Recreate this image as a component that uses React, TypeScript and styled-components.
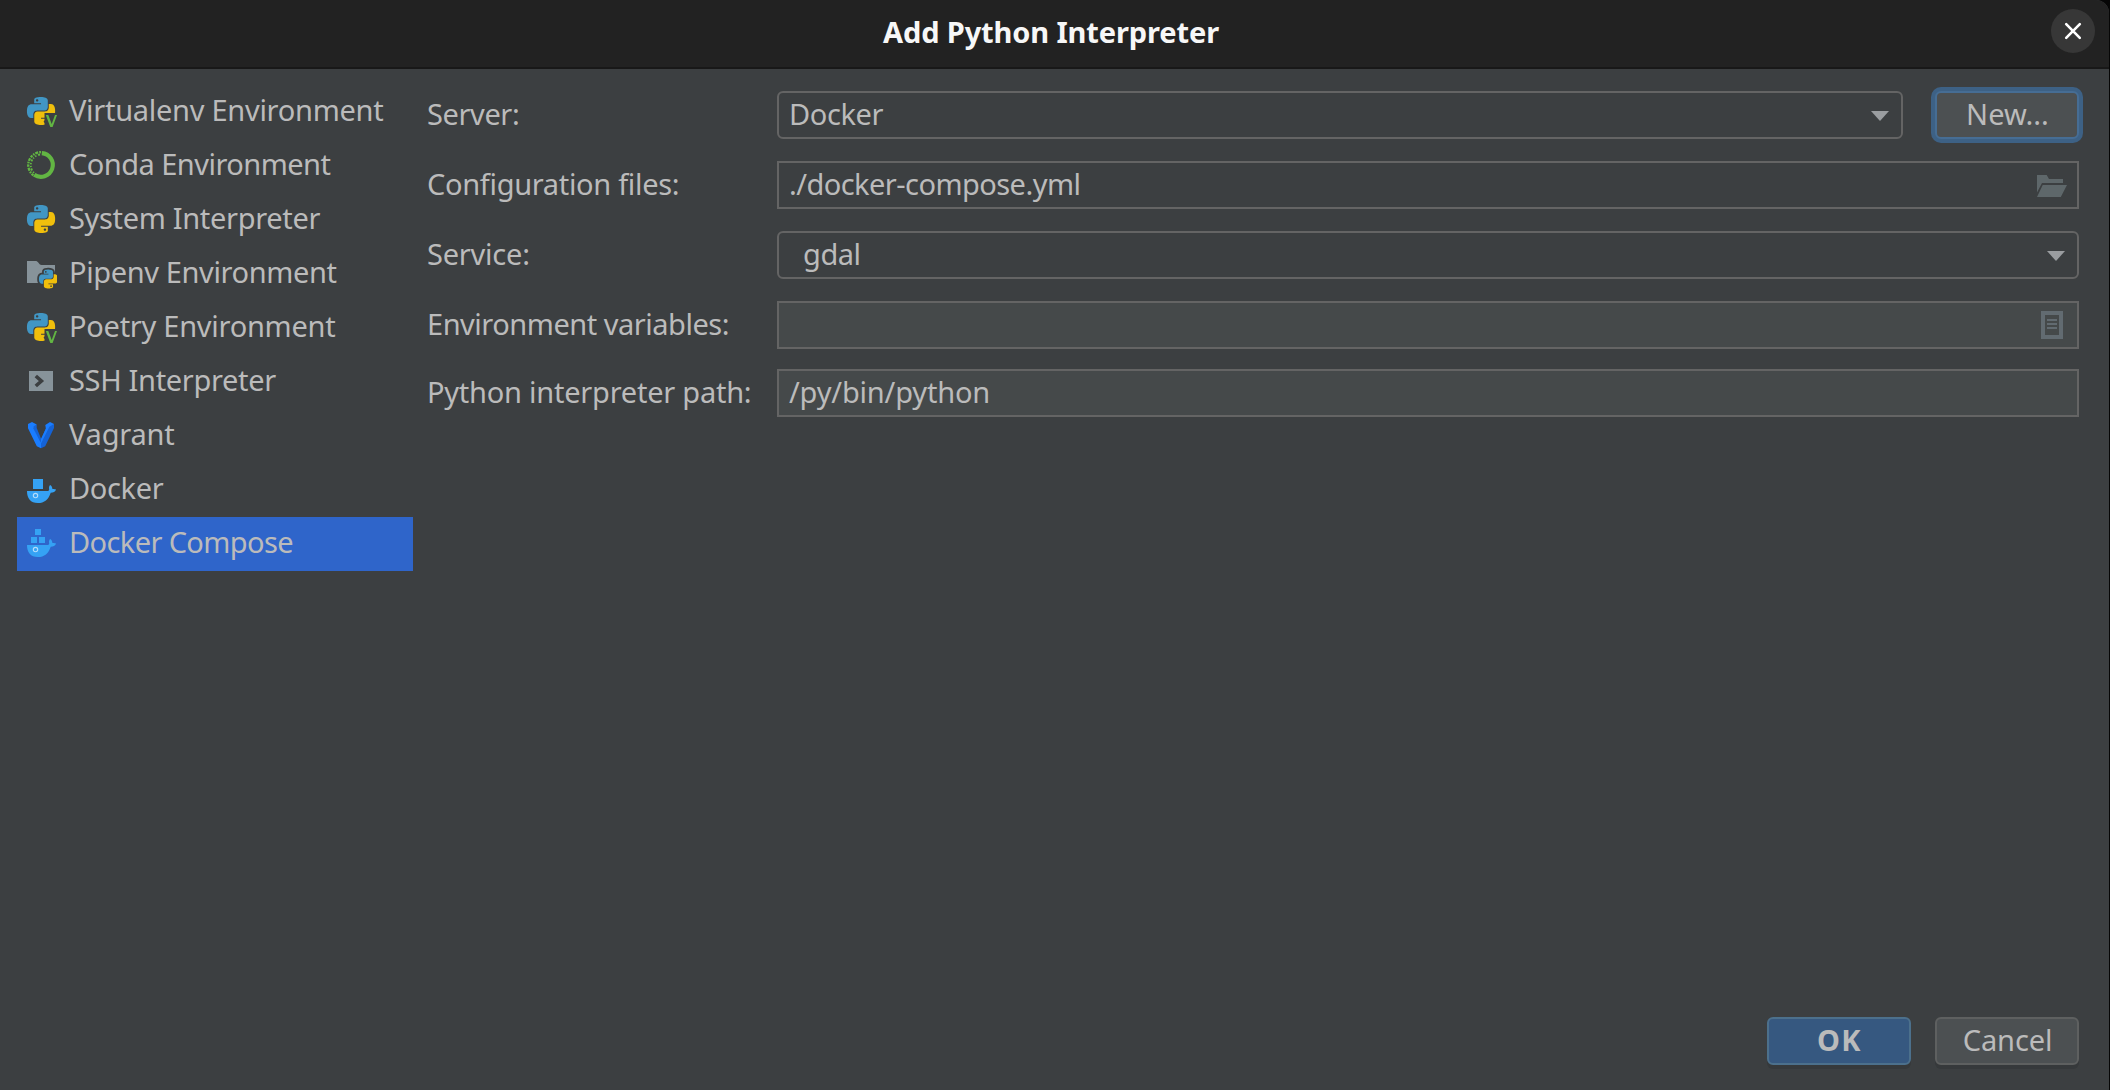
import React from "react";
import styled, { createGlobalStyle, css } from "styled-components";

const color = {
  panel: "#3c3f41",
  field: "#45494a",
  border: "#646464",
  text: "#bbbbbb",
  selection: "#2f65ca",
};

const GlobalStyle = createGlobalStyle`
  * { box-sizing: border-box; }
  body {
    margin: 0;
    background: #060606;
    font-family: "Noto Sans", "Open Sans", sans-serif;
    font-size: 29px;
    line-height: 40px;
    color: ${color.text};
    overflow: hidden;
  }
  svg { display: block; flex: none; }
`;

const Dialog = styled.div`
  display: flex;
  flex-direction: column;
  width: 2109px;
  height: 1090px;
  background: ${color.panel};
  border-top-right-radius: 13px;
  overflow: hidden;
`;

const TitleBar = styled.header`
  display: grid;
  grid-template-columns: 1fr auto 1fr;
  align-items: center;
  height: 69px;
  padding: 0 14px 5px 7px;
  background: #222222;
  border-bottom: 2px solid #181818;
`;

const Text = styled.span<{ $track?: number }>`
  white-space: nowrap;
  letter-spacing: ${(p) => p.$track ?? 0}px;
`;

const Title = styled(Text)`
  grid-column: 2;
  padding-top: 1px;
  font-weight: 700;
  color: #f7f7f7;
`;

const CloseButton = styled.button`
  display: flex;
  align-items: center;
  justify-content: center;
  justify-self: end;
  width: 44px;
  height: 44px;
  padding: 0;
  border: 0;
  border-radius: 50%;
  background: #373737;
`;

const Main = styled.div`
  display: flex;
  flex: 1;
  padding-left: 17px;
`;

const Sidebar = styled.nav`
  width: 396px;
  padding-top: 16px;
`;

const SidebarItem = styled.div<{ $selected?: boolean }>`
  display: flex;
  align-items: center;
  gap: 12px;
  height: 54px;
  padding-left: 8px;
  background: ${(p) => (p.$selected ? color.selection : "transparent")};

  svg { margin-bottom: 2px; }
  ${Text} { margin-bottom: 4px; }
`;

const Form = styled.div`
  display: flex;
  flex-direction: column;
  gap: 22px;
  width: 1652px;
  margin-left: 14px;
  padding-top: 22px;
`;

const FormRow = styled.div<{ $tight?: boolean }>`
  display: flex;
  height: 48px;
  margin-top: ${(p) => (p.$tight ? -2 : 0)}px;
`;

const Label = styled.label`
  display: flex;
  align-items: center;
  width: 350px;
  padding-bottom: 3px;
`;

const controlBox = css`
  display: flex;
  flex: 1;
  align-items: center;
  justify-content: space-between;
  border: 2px solid ${color.border};

  ${Text} { margin-bottom: 3px; }
`;

const ComboBox = styled.div<{ $indent?: number }>`
  ${controlBox}
  padding: 0 12px 0 ${(p) => 10 + (p.$indent ?? 0)}px;
  border-radius: 6px;

  svg { margin-top: 2px; }
`;

const TextField = styled.div<{ $editable?: boolean }>`
  ${controlBox}
  padding: 0 10px;
  background: ${(p) => (p.$editable ? color.field : "transparent")};
`;

const Button = styled.button<{ $kind?: "focused" | "primary" }>`
  display: flex;
  align-items: center;
  justify-content: center;
  width: 144px;
  height: 48px;
  padding: 0 0 3px 1px;
  border: 2px solid #5e6060;
  border-radius: 6px;
  background: #4c5052;
  box-shadow: 0 4px 0 #36393b;
  color: ${color.text};
  font: inherit;

  ${(p) =>
    p.$kind === "focused" &&
    css`
      margin-left: 32px;
      border-color: #466d94;
      box-shadow: 0 0 0 4px #3d6185;
    `}
  ${(p) =>
    p.$kind === "primary" &&
    css`
      border-color: #4c708c;
      background: #365880;
      font-weight: 700;
    `}
`;

const Footer = styled.footer`
  display: flex;
  justify-content: flex-end;
  gap: 24px;
  height: 73px;
  padding-right: 30px;
`;

const PY_BLUE =
  "M14.25.18l.9.2.73.26.59.3.45.32.34.34.25.34.16.33.1.3.04.26.02.2-.01.13V8.5l-.05.63-.13.55-.21.46-.26.38-.3.31-.33.25-.35.19-.35.14-.33.1-.3.07-.26.04-.21.02H8.77l-.69.05-.59.14-.5.22-.41.27-.33.32-.27.35-.2.36-.15.37-.1.35-.07.32-.04.27-.02.21v3.06H3.17l-.21-.03-.28-.07-.32-.12-.35-.18-.36-.26-.36-.36-.35-.46-.32-.59-.28-.73-.21-.88-.14-1.05-.05-1.23.06-1.22.16-1.04.24-.87.32-.71.36-.57.4-.44.42-.33.42-.24.4-.16.36-.1.32-.05.24-.01h.16l.06.01h8.16v-.83H6.18l-.01-2.75-.02-.37.05-.34.11-.31.17-.28.25-.26.31-.23.38-.2.44-.18.51-.15.58-.12.64-.1.71-.06.77-.04.84-.02 1.27.05zm-6.3 1.98l-.23.33-.08.41.08.41.23.34.33.22.41.09.41-.09.33-.22.23-.34.08-.41-.08-.41-.23-.33-.33-.22-.41-.09-.41.09z";
const PY_YELLOW =
  "M21.1 6.11l.28.06.32.12.35.18.36.27.36.35.35.47.32.59.28.73.21.88.14 1.04.05 1.23-.06 1.23-.16 1.04-.24.86-.32.71-.36.57-.4.45-.42.33-.42.24-.4.16-.36.09-.32.05-.24.02-.16-.01h-8.22v.82h5.84l.01 2.76.02.36-.05.34-.11.31-.17.29-.25.25-.31.24-.38.2-.44.17-.51.15-.58.13-.64.09-.71.07-.77.04-.84.01-1.27-.04-1.07-.14-.9-.2-.73-.25-.59-.3-.45-.33-.34-.34-.25-.34-.16-.33-.1-.3-.04-.25-.02-.2.01-.13v-5.34l.05-.64.13-.54.21-.46.26-.38.3-.32.33-.24.35-.2.35-.14.33-.1.3-.06.26-.04.21-.02.13-.01h5.84l.69-.05.59-.14.5-.21.41-.28.33-.32.27-.35.2-.36.15-.36.1-.35.07-.32.04-.28.02-.21V6.07h2.09l.14.01zm-6.47 14.25l-.23.33-.08.41.08.41.23.33.33.23.41.08.41-.08.33-.23.23-.33.08-.41-.08-.41-.23-.33-.33-.23-.41-.08-.41.08z";

const Icon = ({ children }: { children: React.ReactNode }) => (
  <svg width="32" height="32" viewBox="0 0 32 32" fill="none">
    {children}
  </svg>
);

const Snakes = () => (
  <>
    <path fill="#4196c4" d={PY_BLUE} />
    <path fill="#f0bf0c" d={PY_YELLOW} />
  </>
);

const PythonIcon = () => (
  <Icon>
    <g transform="translate(2 2) scale(1.1667)">
      <Snakes />
    </g>
  </Icon>
);

const VenvIcon = () => (
  <Icon>
    <g transform="translate(2 2) scale(1.1667)">
      <Snakes />
    </g>
    <path fill={color.panel} d="M19.500 18h12.500v14H19.500z" />
    <path fill="#62b543" d="M20.800 20h2.500l3.400 9.100L30 20h2l-4.400 12h-2.300z" />
  </Icon>
);

const CondaIcon = () => (
  <Icon>
    <path stroke="#62b543" strokeWidth="4.200" d="M16.800 4.100A11.900 11.900 0 1 1 9.200 25.800" />
    <g stroke="#62b543">
      <path strokeWidth="2.300" strokeDasharray="2.400 1 1.600 .9 3 1.100" d="M8.400 26.300A12.900 12.900 0 0 1 16 3.100" />
      <path strokeWidth="1.800" strokeDasharray="1.500 1.600 2.200 1.200 1.200 1.500" d="M9 23.900A10.800 10.800 0 0 1 16 5.400" />
    </g>
  </Icon>
);

const PipenvIcon = () => (
  <Icon>
    <path fill="#87939a" d="M2 4h9.200c1.800 0 3 4 5.300 4H30v18H2z" />
    <g transform="translate(14 12.6) scale(.785)">
      <g stroke={color.panel} strokeWidth="4.500" strokeLinejoin="round">
        <path d={PY_BLUE} />
        <path d={PY_YELLOW} />
      </g>
      <Snakes />
    </g>
  </Icon>
);

const SshIcon = () => (
  <Icon>
    <path fill="#87939a" d="M4 6h24v20H4z" />
    <path stroke={color.panel} strokeWidth="3.600" d="M10.800 11l5.600 5-5.600 5" />
  </Icon>
);

const VagrantIcon = () => (
  <Icon>
    <path fill="#1563d6" d="M7.200 6.600L11.700 5.600V9l4.500 11 4.700-10.500V6L29 5v4l-8.800 18.300L16 29.200z" />
    <path fill="#1a7dff" d="M3 5l4-2 4.700 2.600L8.600 7.300v2.400L14.800 22l1.200 1.400v5.800l-4.200-2L3 9.300z" />
    <path fill="#1a7dff" d="M20.300 6l4.700-3 4 2-4.600 2.800L16 24.500V20l4.900-10.600z" />
  </Icon>
);

const Whale = () => (
  <>
    <path
      fill="#35a2f4"
      d="M2 18h20.800c1.200-.2 1.600-.8 1.300-2-.3-1.600.1-3 1-4 1.600 1 2.300 2.400 2.300 4.100 1.300-.4 2.500-.2 3.700.4-.9 2.200-2.800 3.200-5.400 3.200C23.600 26.400 19.400 30 12.800 30 5.600 30 2 25.400 2 18z"
    />
    <circle cx="10.500" cy="22.600" r="2.200" stroke="#b4dcfb" strokeWidth="1.100" />
  </>
);

const DockerIcon = () => (
  <Icon>
    <path fill="#35a2f4" d="M8 6h10v10H8z" />
    <Whale />
  </Icon>
);

const ComposeIcon = () => (
  <Icon>
    <path fill="#35a2f4" d="M10 2h6v6h-6zM6 10h6v6H6zM14 10h6v6h-6z" />
    <Whale />
  </Icon>
);

const OpenFolderIcon = () => (
  <Icon>
    <path fill="#5e676a" d="M2 6h9.700l2.300 4h14v4H7L2 23.500zM7.700 16H32l-6.200 12H2z" />
  </Icon>
);

const DocumentIcon = () => (
  <Icon>
    <path fill="#626b71" fillRule="evenodd" d="M6 2h22v28H6zM10 6v20h14V6z" />
    <path fill="#626b71" d="M12 10h10v2H12zM12 14h10v2H12zM12 18h10v2H12z" />
  </Icon>
);

const ArrowIcon = () => (
  <svg width="18" height="10" viewBox="0 0 18 10">
    <path fill="#9a9da0" d="M0 0h18L9 10z" />
  </svg>
);

const CloseIcon = () => (
  <svg width="18" height="18" viewBox="0 0 18 18">
    <path stroke="#ffffff" strokeWidth="2.600" strokeLinecap="round" d="M2.200 2.200l13.600 13.600M15.800 2.200L2.200 15.800" />
  </svg>
);

const environments = [
  { name: "Virtualenv Environment", icon: VenvIcon, track: -0.28 },
  { name: "Conda Environment", icon: CondaIcon, track: -0.53 },
  { name: "System Interpreter", icon: PythonIcon, track: -0.33 },
  { name: "Pipenv Environment", icon: PipenvIcon, track: -0.38 },
  { name: "Poetry Environment", icon: VenvIcon, track: -0.27 },
  { name: "SSH Interpreter", icon: SshIcon, track: -0.33 },
  { name: "Vagrant", icon: VagrantIcon, track: -0.2 },
  { name: "Docker", icon: DockerIcon, track: -0.35 },
  { name: "Docker Compose", icon: ComposeIcon, track: -0.62, selected: true },
];

export default function App() {
  return (
    <>
      <GlobalStyle />
      <Dialog>
        <TitleBar>
          <Title $track={-0.12}>Add Python Interpreter</Title>
          <CloseButton aria-label="Close">
            <CloseIcon />
          </CloseButton>
        </TitleBar>
        <Main>
          <Sidebar>
            {environments.map(({ name, icon: EnvIcon, track, selected }) => (
              <SidebarItem key={name} $selected={selected}>
                <EnvIcon />
                <Text $track={track}>{name}</Text>
              </SidebarItem>
            ))}
          </Sidebar>
          <Form>
            <FormRow>
              <Label><Text $track={-0.4}>Server:</Text></Label>
              <ComboBox>
                <Text $track={-0.4}>Docker</Text>
                <ArrowIcon />
              </ComboBox>
              <Button $kind="focused"><Text>New...</Text></Button>
            </FormRow>
            <FormRow>
              <Label><Text $track={-0.32}>Configuration files:</Text></Label>
              <TextField>
                <Text $track={-0.55}>./docker-compose.yml</Text>
                <OpenFolderIcon />
              </TextField>
            </FormRow>
            <FormRow>
              <Label><Text $track={-0.22}>Service:</Text></Label>
              <ComboBox $indent={14}>
                <Text $track={-0.45}>gdal</Text>
                <ArrowIcon />
              </ComboBox>
            </FormRow>
            <FormRow>
              <Label><Text $track={-0.48}>Environment variables:</Text></Label>
              <TextField $editable>
                <Text />
                <DocumentIcon />
              </TextField>
            </FormRow>
            <FormRow $tight>
              <Label><Text $track={-0.24}>Python interpreter path:</Text></Label>
              <TextField $editable>
                <Text $track={-0.18}>/py/bin/python</Text>
              </TextField>
            </FormRow>
          </Form>
        </Main>
        <Footer>
          <Button $kind="primary"><Text $track={1.5}>OK</Text></Button>
          <Button><Text $track={-0.1}>Cancel</Text></Button>
        </Footer>
      </Dialog>
    </>
  );
}
